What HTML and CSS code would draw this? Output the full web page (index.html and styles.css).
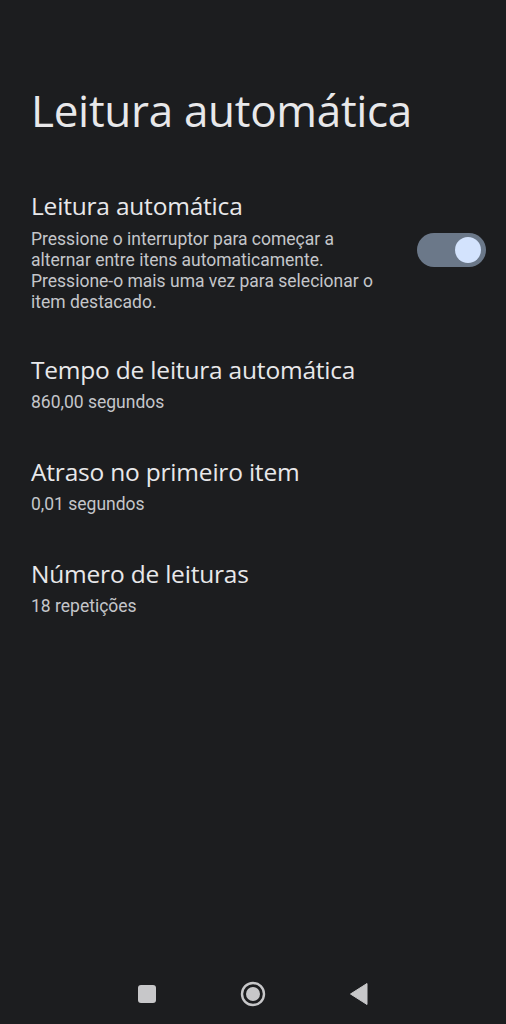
FILE: index.html
```html
<!DOCTYPE html>
<html lang="pt">
<head>
    <meta charset="UTF-8">
    <meta name="viewport" content="width=device-width, initial-scale=1.0">
    <title>Leitura automática</title>
    <link rel="stylesheet" href="styles.css">
</head>
<body>
    <div class="screen">
      <h1 class="page-title">Leitura automática</h1>

      <div class="pref-list">
        <div class="pref pref-switch">
          <div class="pref-text">
            <div class="pref-title">Leitura automática</div>
            <div class="pref-summary">Pressione o interruptor para começar a alternar entre itens automaticamente. Pressione-o mais uma vez para selecionar o item destacado.</div>
          </div>
          <div class="switch on"><span class="thumb"></span></div>
        </div>

        <div class="pref">
          <div class="pref-text">
            <div class="pref-title">Tempo de leitura automática</div>
            <div class="pref-summary">860,00 segundos</div>
          </div>
        </div>

        <div class="pref">
          <div class="pref-text">
            <div class="pref-title">Atraso no primeiro item</div>
            <div class="pref-summary">0,01 segundos</div>
          </div>
        </div>

        <div class="pref">
          <div class="pref-text">
            <div class="pref-title">Número de leituras</div>
            <div class="pref-summary">18 repetições</div>
          </div>
        </div>
      </div>

      <div class="nav-bar">
        <svg class="nav-btn" width="20" height="20" viewBox="0 0 20 20">
          <rect x="1" y="1" width="18" height="18" rx="3" fill="#c7c7c9"/>
        </svg>
        <svg class="nav-btn" width="26" height="26" viewBox="0 0 26 26">
          <circle cx="13" cy="13" r="11" fill="none" stroke="#c7c7c9" stroke-width="2.4"/>
          <circle cx="13" cy="13" r="7" fill="#c7c7c9"/>
        </svg>
        <svg class="nav-btn" width="20" height="24" viewBox="0 0 20 24">
          <path d="M18 1.5 L18 22.5 L1.5 12 Z" fill="#c7c7c9" stroke="#c7c7c9" stroke-width="1" stroke-linejoin="round"/>
        </svg>
      </div>
    </div>
</body>
</html>
```

FILE: styles.css
```css
body {
  margin: 0;
  background: #1c1d1f;
  font-family: Roboto, sans-serif;
  color: #e3e3e6;
}

.screen {
  height: 1024px;
  display: flex;
  flex-direction: column;
}

.page-title {
  margin: 82px 0 0 31px;
  font-family: "Open Sans", sans-serif;
  font-weight: 400;
  font-size: 44px;
  line-height: 56px;
  letter-spacing: -0.3px;
  color: #e8e8ea;
}

.pref-list {
  margin-top: 53px;
  display: flex;
  flex-direction: column;
}

.pref {
  display: flex;
  padding: 0 20px 0 31px;
  margin-bottom: 44px;
}

.pref-text {
  flex: 1;
}

.pref-title {
  font-family: "Open Sans", sans-serif;
  font-size: 24.5px;
  line-height: 30px;
  letter-spacing: -0.2px;
  color: #e8e8ea;
}

.pref-summary {
  margin-top: 7px;
  font-size: 17.5px;
  line-height: 21px;
  color: #c4c6ca;
  max-width: 360px;
}

.pref-switch {
  margin-bottom: 42px;
}

.pref-switch .pref-summary {
  margin-top: 8px;
}

.switch {
  width: 69px;
  height: 34px;
  border-radius: 17px;
  background: #6b7889;
  position: relative;
  margin-left: 20px;
  margin-top: 42px;
  flex-shrink: 0;
}

.switch .thumb {
  position: absolute;
  top: 4px;
  right: 5px;
  width: 26px;
  height: 26px;
  border-radius: 50%;
  background: #d3e3fd;
}

.nav-bar {
  margin-top: auto;
  height: 60px;
  display: flex;
  justify-content: center;
  align-items: center;
  gap: 83px;
}
```
